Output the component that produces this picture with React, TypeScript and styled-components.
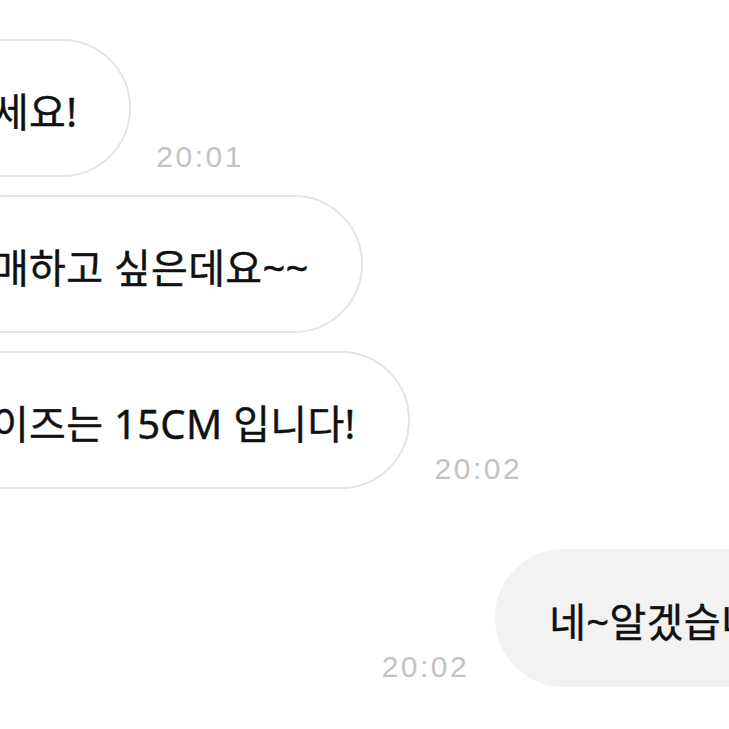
import styled, { createGlobalStyle } from 'styled-components';

const Global = createGlobalStyle`
  html, body {
    margin: 0;
    padding: 0;
    background: #ffffff;
    overflow: hidden;
  }
`;

const Screen = styled.div`
  width: 729px;
  height: 729px;
  overflow: hidden;
  background: #ffffff;
  font-family: "Noto Sans", "Noto Sans CJK KR", sans-serif;
`;

const Thread = styled.div`
  display: flex;
  flex-direction: column;
  padding-top: 39px;
`;

const Row = styled.div<{ $mine?: boolean; $gap?: number }>`
  display: flex;
  align-items: flex-end;
  justify-content: ${({ $mine }) => ($mine ? 'flex-end' : 'flex-start')};
  gap: ${({ $mine }) => ($mine ? '26px' : '25px')};
  margin-top: ${({ $gap }) => $gap ?? 0}px;
  margin-left: ${({ $mine }) => ($mine ? '0' : '-62px')};
  margin-right: ${({ $mine }) => ($mine ? '-120px' : '0')};
`;

const Bubble = styled.div<{ $mine?: boolean }>`
  box-sizing: border-box;
  height: 138px;
  display: flex;
  align-items: center;
  flex-shrink: 0;
  padding: 4px 52px 0;
  border-radius: 69px;
  white-space: nowrap;
  font-size: 40px;
  font-weight: 400;
  letter-spacing: 0.3px;
  color: #111111;
  -webkit-text-stroke: 0.4px #111111;
  background: ${({ $mine }) => ($mine ? '#f2f2f2' : '#ffffff')};
  border: 2px solid ${({ $mine }) => ($mine ? '#f2f2f2' : '#e4e4e4')};
`;

const Time = styled.span`
  font-family: "Liberation Sans", Arial, sans-serif;
  font-size: 30px;
  line-height: 1;
  letter-spacing: 2.5px;
  color: #c3c3c3;
  margin-bottom: 5px;
  flex-shrink: 0;
`;

type Msg = { text: string; time?: string; mine?: boolean; gap: number };

const messages: Msg[] = [
  { text: '세요!', time: '20:01', gap: 0 },
  { text: '매하고 싶은데요~~', gap: 18 },
  { text: '이즈는 15CM 입니다!', time: '20:02', gap: 18 },
  { text: '네~알겠습니다', time: '20:02', mine: true, gap: 60 },
];

export default function App() {
  return (
    <Screen>
      <Global />
      <Thread>
        {messages.map((m, i) => (
          <Row key={i} $mine={m.mine} $gap={m.gap}>
            {m.mine && m.time && <Time>{m.time}</Time>}
            <Bubble $mine={m.mine}>{m.text}</Bubble>
            {!m.mine && m.time && <Time>{m.time}</Time>}
          </Row>
        ))}
      </Thread>
    </Screen>
  );
}
